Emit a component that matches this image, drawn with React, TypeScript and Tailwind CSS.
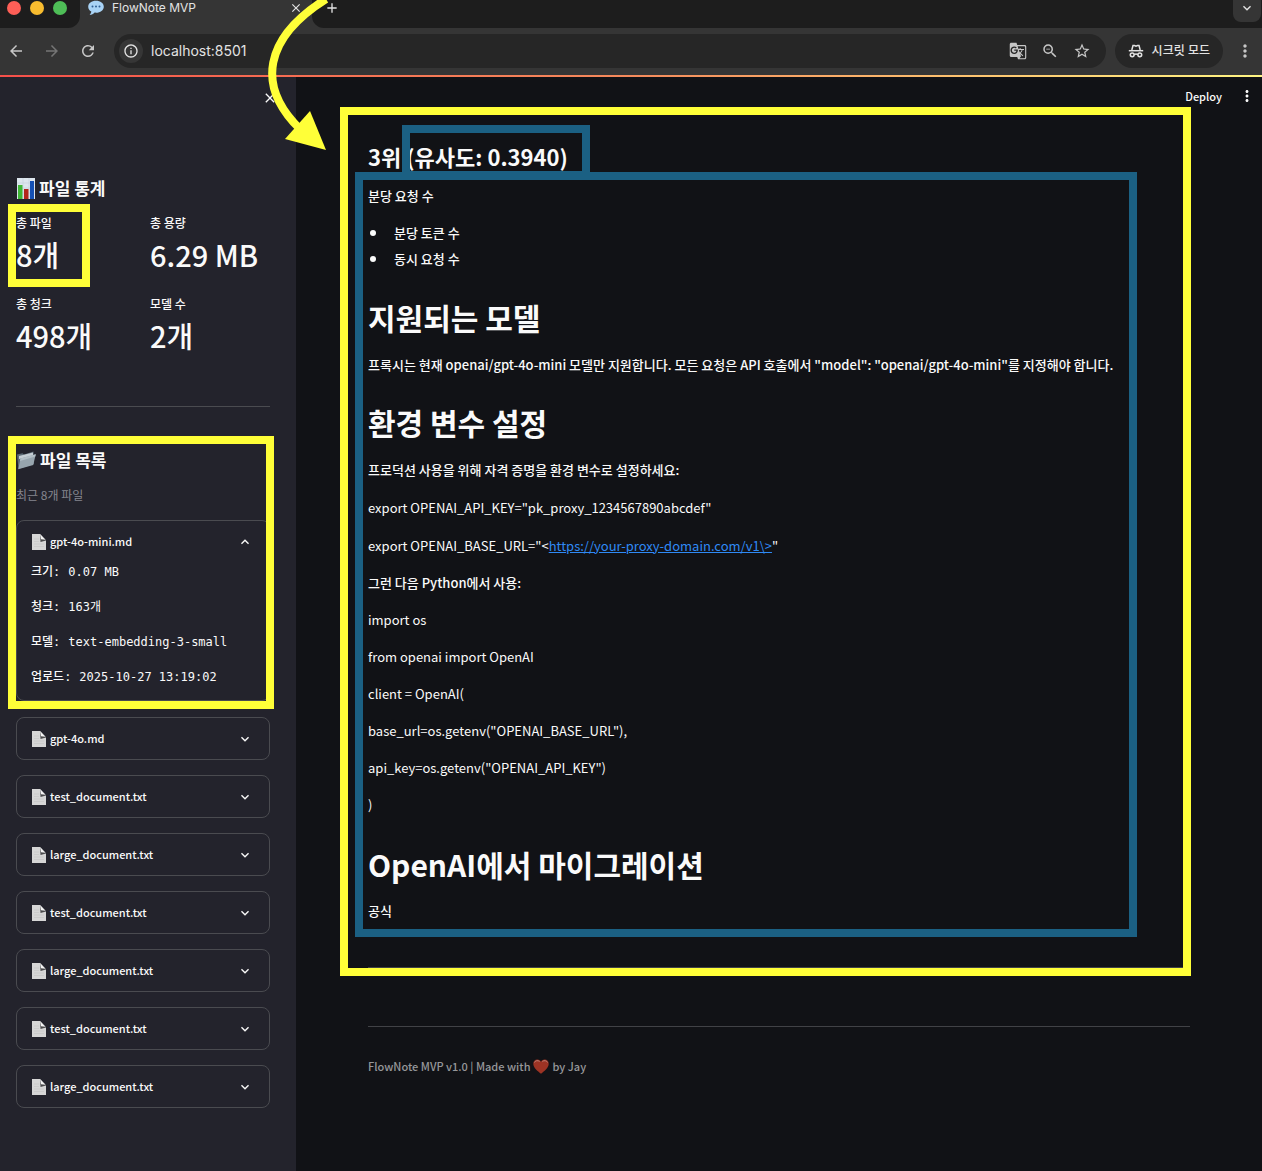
import { useState } from "react";
import {
  MdAdd,
  MdArrowBack,
  MdArrowForward,
  MdClose,
  MdExpandLess,
  MdExpandMore,
  MdGTranslate,
  MdInfoOutline,
  MdMoreVert,
  MdRefresh,
  MdStarOutline,
  MdZoomOut,
} from "react-icons/md";

function SpeechIcon() {
  return (
    <svg viewBox="0 0 16 16" className="size-4" aria-hidden="true">
      <path
        d="M8 .8C3.6.8.2 3.3.2 6.7c0 2.1 1.2 3.8 3.1 4.9-.1 1.300-.8 2.500-1.700 3.300 2 0 3.900-.9 5-2.300.5.1.9.1 1.400.1 4.400 0 7.800-2.600 7.800-6S12.400.8 8 .8Z"
        fill="#a9d3f5"
      />
      <circle cx="4.500" cy="6.600" r="1" fill="#2f5f93" />
      <circle cx="8" cy="6.600" r="1" fill="#2f5f93" />
      <circle cx="11.500" cy="6.600" r="1" fill="#2f5f93" />
    </svg>
  );
}

function IncognitoIcon() {
  return (
    <svg viewBox="0 0 16 16" className="size-4" aria-hidden="true">
      <g fill="none" stroke="#e3e3e3" strokeWidth="1.500">
        <path d="M3.800 7 5 2.500h1.500L8 3.100l1.500-.6H11L12.200 7" />
        <path d="M.8 7.700h14.400" />
        <circle cx="4.200" cy="11.800" r="1.900" />
        <circle cx="11.800" cy="11.800" r="1.900" />
        <path d="M6.100 11.500c1.200-.7 2.600-.7 3.800 0" />
      </g>
    </svg>
  );
}

function ChartIcon() {
  return (
    <svg viewBox="0 0 19 21" className="h-[21px] w-[19px]" aria-hidden="true">
      <rect x="1" width="18" height="21" fill="#dde6ee" />
      <path d="M1 5h18M1 10h18M1 15h18M7 0v21M13 0v21" stroke="#c3d0dc" strokeWidth=".6" />
      <rect x="2" y="7" width="4.500" height="14" fill="#3fb636" />
      <rect x="8" y="11" width="4.500" height="10" fill="#b3261c" />
      <rect x="14" y="3" width="4" height="18" fill="#1450b4" />
    </svg>
  );
}

function FolderIcon() {
  return (
    <svg viewBox="0 0 20 20" className="h-5 w-5" aria-hidden="true">
      <path d="M1 4.500 6.500 3.300 8 4.500 17.500 1.500 18 14 2.500 19Z" fill="#5d6b76" />
      <path d="M3 6 17 2.500v4L3 9Z" fill="#c5ced4" />
      <path d="M4.500 8.500 19.800 4.200 17.200 15 2.200 19.200Z" fill="#97a5ae" />
      <path d="M4.500 8.500 19.800 4.200 19.200 6.500 4 11Z" fill="#b3bfc6" />
    </svg>
  );
}

function DocIcon() {
  return (
    <svg viewBox="0 0 14 16" className="h-4 w-3.5 shrink-0" aria-hidden="true">
      <path d="M0 0h8l6 6.500V16H0Z" fill="#d6d6d6" />
      <path d="M8 0 14 6.500 8.500 8Z" fill="#4a4a4c" />
      <path d="M8 0 13.500 5.800 9 5.200Z" fill="#f4f4f4" />
      <path d="M2 5h5M2 7.500h5M2 10h10M2 12.500h10" stroke="#c6c6c6" strokeWidth=".7" />
    </svg>
  );
}

function HeartIcon() {
  return (
    <svg viewBox="0 0 16 15" className="h-[15px] w-4" aria-hidden="true">
      <path d="M8 14.800C4.500 12 .3 8.800.3 4.800.3 2.300 2 .5 4.300.5 5.900.5 7.300 1.400 8 2.800 8.700 1.400 10.100.5 11.700.5c2.300 0 4 1.800 4 4.300 0 4-4.200 7.200-7.700 10Z" fill="#9c3324" />
      <path d="M1.500 3.500C2.300 1.700 4.800.9 6.600 2.500M9.400 2.500c1.800-1.600 4.300-.8 5.100 1" stroke="#b98077" strokeWidth="1" fill="none" />
    </svg>
  );
}

const iconButton = "flex size-6 items-center justify-center";

function BrowserChrome() {
  return (
    <header className="bg-[#353535] font-['Inter','Noto_Sans_CJK_KR',sans-serif] text-[#e3e3e3]">
      <div className="flex h-7 overflow-hidden">
        <div className="flex w-20 items-start gap-[9px] rounded-br-xl bg-[#1d1d1d] pt-px pl-[7px]">
          <span className="size-3.5 rounded-full bg-[#fe5f57]" />
          <span className="size-3.5 rounded-full bg-[#f8bc2f]" />
          <span className="size-3.5 rounded-full bg-[#4ebe57]" />
        </div>
        <div className="flex h-4 w-[232px] items-center pr-2 pl-2">
          <SpeechIcon />
          <span className="ml-2 flex-1 text-xs">FlowNote MVP</span>
          <button type="button" aria-label="Close tab" className="flex size-4 items-center justify-center">
            <MdClose className="size-3.5" />
          </button>
        </div>
        <div className="flex flex-1 items-start justify-between rounded-bl-xl bg-[#1d1d1d] pl-3">
          <button type="button" aria-label="New tab" className="flex size-4 items-center justify-center">
            <MdAdd className="size-4" />
          </button>
          <button
            type="button"
            aria-label="Search tabs"
            className="mr-px flex h-[22px] w-7 justify-center rounded-b-lg bg-[#353535]"
          >
            <MdExpandMore className="size-4" />
          </button>
        </div>
      </div>
      <div className="flex h-[47px] items-center pr-[5px] pb-px pl-1">
        <button type="button" aria-label="Back" className={iconButton}>
          <MdArrowBack className="size-[18px] text-[#c7c7c7]" />
        </button>
        <button type="button" aria-label="Forward" className={iconButton + " ml-3"}>
          <MdArrowForward className="size-[18px] text-[#757575]" />
        </button>
        <button type="button" aria-label="Reload" className={iconButton + " ml-3"}>
          <MdRefresh className="size-[18px] text-[#c7c7c7]" />
        </button>
        <div className="ml-3.5 flex h-[34px] flex-1 items-center rounded-full bg-[#262626] pr-3 pl-[5px]">
          <span className="flex size-6 shrink-0 items-center justify-center rounded-full bg-[#363636]">
            <MdInfoOutline className="size-4" />
          </span>
          <input
            aria-label="Address"
            defaultValue="localhost:8501"
            className="ml-2 min-w-0 flex-1 bg-transparent text-sm outline-none"
          />
          <div className="flex gap-2 text-[#c7c7c7]">
            <button type="button" aria-label="Translate" className={iconButton}>
              <MdGTranslate className="size-[18px]" />
            </button>
            <button type="button" aria-label="Zoom" className={iconButton}>
              <MdZoomOut className="size-[18px]" />
            </button>
            <button type="button" aria-label="Bookmark" className={iconButton}>
              <MdStarOutline className="size-[18px]" />
            </button>
          </div>
        </div>
        <button
          type="button"
          className="ml-[9px] flex h-[34px] items-center gap-2 rounded-full bg-[#262626] px-[13px] text-xs font-medium"
        >
          <IncognitoIcon />
          시크릿 모드
        </button>
        <button type="button" aria-label="Browser menu" className={iconButton + " ml-2.5"}>
          <MdMoreVert className="size-5 text-[#c7c7c7]" />
        </button>
      </div>
      <div className="h-0.5 bg-linear-to-r from-[#f5504a] via-[#f58a5c] to-[#fff583]" />
    </header>
  );
}

const stats = [
  { label: "총 파일", value: "8개", marked: true },
  { label: "총 용량", value: "6.29 MB" },
  { label: "총 청크", value: "498개" },
  { label: "모델 수", value: "2개" },
];

type FileItem = { name: string; details?: { label: string; value: string }[] };

const files: FileItem[] = [
  {
    name: "gpt-4o-mini.md",
    details: [
      { label: "크기", value: "0.07 MB" },
      { label: "청크", value: "163개" },
      { label: "모델", value: "text-embedding-3-small" },
      { label: "업로드", value: "2025-10-27 13:19:02" },
    ],
  },
  { name: "gpt-4o.md" },
  { name: "test_document.txt" },
  { name: "large_document.txt" },
  { name: "test_document.txt" },
  { name: "large_document.txt" },
  { name: "test_document.txt" },
  { name: "large_document.txt" },
];

function FileCard({ file }: { file: FileItem }) {
  const [open, setOpen] = useState(Boolean(file.details));
  const Chevron = open ? MdExpandLess : MdExpandMore;
  return (
    <div className="rounded-lg border border-[#4a4b50]">
      <button
        type="button"
        aria-expanded={open}
        onClick={() => setOpen(!open)}
        className="flex h-[41px] w-full items-center pr-4 pl-[15px] text-left text-[11px] font-medium"
      >
        <DocIcon />
        <span className="ml-1 flex-1">{file.name}</span>
        <Chevron className="size-4" />
      </button>
      {open && file.details && (
        <dl className="flex flex-col gap-[15px] px-3.5 pb-[13px] font-['DejaVu_Sans_Mono','Noto_Sans_CJK_KR',monospace] text-xs leading-5">
          {file.details.map((d) => (
            <div key={d.label} className="flex h-5 items-baseline gap-2">
              <dt className="font-medium">{d.label}:</dt>
              <dd>{d.value}</dd>
            </div>
          ))}
        </dl>
      )}
    </div>
  );
}

function Sidebar() {
  return (
    <aside className="w-[296px] shrink-0 bg-[#23232c] pr-[26px] pl-4">
      <div className="flex h-[42px] items-center justify-end">
        <button type="button" aria-label="Close sidebar" className="-mr-2 flex size-4 items-center justify-center">
          <MdClose className="size-4" />
        </button>
      </div>

      <h2 className="mt-[57px] flex items-center gap-1 text-[17px] leading-6 font-bold">
        <ChartIcon />
        파일 통계
      </h2>
      <dl className="mt-[13px] grid grid-cols-2 gap-x-3.5 gap-y-5">
        {stats.map((s) => (
          <div key={s.label} className="relative whitespace-nowrap">
            <dt className="text-xs leading-5 font-medium">{s.label}</dt>
            <dd className="mt-px text-[29px] leading-10 font-medium">{s.value}</dd>
            {s.marked && (
              <div className="pointer-events-none absolute -top-[9px] -left-2 h-[83px] w-[82px] border-8 border-[#ffff38]" />
            )}
          </div>
        ))}
      </dl>

      <hr className="mt-[51px] border-[#4a4b50]" />

      <section className="relative mt-[41px]">
        <h2 className="flex items-center gap-1 text-[17px] leading-6 font-bold">
          <FolderIcon />
          파일 목록
        </h2>
        <p className="mt-[13px] mb-[15px] text-xs leading-5 text-[#85868f]">최근 8개 파일</p>
        <FileCard file={files[0]} />
        <div className="pointer-events-none absolute -top-3 -right-1 -bottom-2 -left-2 border-8 border-[#ffff38]" />
      </section>
      <div className="mt-4 flex flex-col gap-[15px]">
        {files.slice(1).map((f, i) => (
          <FileCard key={i} file={f} />
        ))}
      </div>
    </aside>
  );
}

const pythonLines = [
  "그런 다음 Python에서 사용:",
  "import os",
  "from openai import OpenAI",
  "client = OpenAI(",
  'base_url=os.getenv("OPENAI_BASE_URL"),',
  'api_key=os.getenv("OPENAI_API_KEY")',
  ")",
];

const bullet =
  "flex items-center before:mr-[18px] before:ml-0.5 before:size-1.5 before:rounded-full before:bg-current";

function Main() {
  return (
    <main className="min-w-0 flex-1 bg-[#111216]">
      <div className="flex h-[38px] items-center justify-end pr-1.5">
        <button type="button" className="text-[11px] font-medium">
          Deploy
        </button>
        <button type="button" aria-label="App menu" className="ml-4 flex size-[18px] items-center justify-center">
          <MdMoreVert className="size-[18px]" />
        </button>
      </div>

      <div className="px-[72px] pt-[25px]">
        <article className="relative">
          <h3 className="text-[22px] leading-8 font-bold">
            3위{" "}
            <span className="relative inline-block">
              (유사도: 0.3940)
              <span className="pointer-events-none absolute -top-[15px] -right-[22px] -bottom-[7px] -left-1 border-8 border-[#1b6083]" />
            </span>
          </h3>

          <div className="relative mt-[13px] text-[13px] leading-[22px] font-medium">
            <p>분당 요청 수</p>
            <ul className="mt-[15px] flex flex-col gap-1">
              <li className={bullet}>분당 토큰 수</li>
              <li className={bullet}>동시 요청 수</li>
            </ul>

            <h1 className="mt-[27px] text-[30px] leading-10 font-bold">지원되는 모델</h1>
            <p className="mt-[17px]">
              프록시는 현재 openai/gpt-4o-mini 모델만 지원합니다. 모든 요청은 API 호출에서 "model":
              "openai/gpt-4o-mini"를 지정해야 합니다.
            </p>

            <h1 className="mt-[26px] text-[30px] leading-10 font-bold">환경 변수 설정</h1>
            <div className="mt-[17px] flex flex-col gap-4">
              <p>프로덕션 사용을 위해 자격 증명을 환경 변수로 설정하세요:</p>
              <p className="font-normal">export OPENAI_API_KEY="pk_proxy_1234567890abcdef"</p>
              <p className="font-normal">
                export OPENAI_BASE_URL="&lt;
                <a href="https://your-proxy-domain.com/v1" className="text-[#2f8af5] underline">
                  https://your-proxy-domain.com/v1\&gt;
                </a>
                "
              </p>
            </div>
            <div className="mt-[15px] flex flex-col gap-[15px] font-normal">
              {pythonLines.map((line) => (
                <p key={line} className="first:font-medium">
                  {line}
                </p>
              ))}
            </div>

            <h1 className="mt-[28px] text-[30px] leading-10 font-bold">OpenAI에서 마이그레이션</h1>
            <p className="mt-4">공식</p>
            <div className="pointer-events-none absolute -top-[13px] right-[53px] -bottom-[15px] -left-[13px] border-8 border-[#1b6083]" />
          </div>

          <hr className="mt-[45px] border-[#414246]" />
          <div className="pointer-events-none absolute -top-[33px] -right-px -bottom-2 -left-7 border-8 border-[#ffff38]" />
        </article>

        <hr className="mt-[58px] border-[#414246]" />
        <footer className="mt-[29px] flex items-center text-[11px] leading-5 font-medium text-[#96979a]">
          FlowNote MVP v1.0 | Made with
          <span className="mx-[3px]">
            <HeartIcon />
          </span>
          by Jay
        </footer>
      </div>
    </main>
  );
}

export default function App() {
  return (
    <div className="relative flex min-h-screen flex-col overflow-hidden bg-[#111216] font-['Noto_Sans_CJK_KR',sans-serif] text-[#fafafa]">
      <BrowserChrome />
      <div className="flex flex-1">
        <Sidebar />
        <Main />
      </div>
      <svg
        viewBox="0 0 90 150"
        className="pointer-events-none absolute top-0 left-[250px] h-[150px] w-[90px]"
        aria-hidden="true"
      >
        <path d="M76 -1C14 38 6 86 50 129" fill="none" stroke="#ffff38" strokeWidth="8" />
        <path d="M76 150 35 139 60 111Z" fill="#ffff38" />
      </svg>
    </div>
  );
}
